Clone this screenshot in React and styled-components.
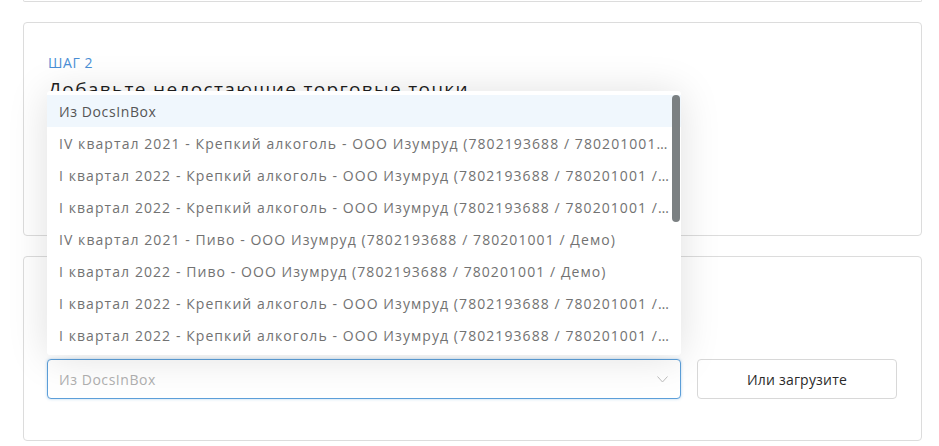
import React from "react";
import styled, { createGlobalStyle } from "styled-components";

const Global = createGlobalStyle`
  html, body { margin: 0; padding: 0; background: #fff; }
  body { font-family: "Open Sans", "Liberation Sans", sans-serif; }
  * { box-sizing: border-box; }
`;

const Page = styled.div`
  display: flex;
  flex-direction: column;
  gap: 20px;
  padding: 0 17px 0 23px;
  width: 939px;
`;

const CardStub = styled.div`
  height: 2px;
  border: 1px solid #dcdcdc;
  border-top: none;
  border-radius: 0 0 4px 4px;
`;

const Card = styled.section`
  position: relative;
  border: 1px solid #dcdcdc;
  border-radius: 4px;
  padding: ${(p) => p.$pad};
  min-height: ${(p) => p.$minH || "auto"};
  display: flex;
  flex-direction: column;
`;

const Step = styled.div`
  font-size: 14px;
  line-height: 16px;
  letter-spacing: 0.6px;
  color: #4a8fd6;
  text-transform: uppercase;
`;

const Title = styled.h2`
  margin: 6px 0 0;
  font-size: 19px;
  line-height: 24px;
  letter-spacing: 1.35px;
  font-weight: 400;
  color: #1e1e1e;
`;

const Row = styled.div`
  display: flex;
  gap: 16px;
`;

const SelectWrap = styled.div`
  position: relative;
  width: 634px;
`;

const SelectBox = styled.div`
  height: 40px;
  border: 1px solid #5d9fd9;
  border-radius: 4px;
  box-shadow: 0 0 3px rgba(93, 159, 217, 0.45);
  display: flex;
  align-items: center;
  justify-content: space-between;
  padding: 0 12px 0 11px;
  font-size: 14px;
  letter-spacing: 0.55px;
  color: #b0b0b0;
  background: #fff;
`;

const Menu = styled.ul`
  position: absolute;
  left: 0;
  right: 0;
  bottom: 44px;
  margin: 0;
  padding: 4px 0;
  list-style: none;
  background: #fff;
  border-radius: 3px;
  box-shadow: 0 2px 40px rgba(0, 0, 0, 0.13);
  overflow: hidden;
  z-index: 5;
`;

const Item = styled.li`
  height: 32px;
  display: flex;
  align-items: center;
  padding: 0 11px 0 12px;
  font-size: 14px;
  letter-spacing: ${(p) => (p.$active ? "0.6px" : "1.07px")};
  color: ${(p) => (p.$active ? "#555" : "#727272")};
  background: ${(p) => (p.$active ? "#f0f7fd" : "#fff")};
  white-space: nowrap;
  overflow: hidden;
`;

const ItemText = styled.span`
  overflow: hidden;
  text-overflow: ellipsis;
`;

const Thumb = styled.div`
  position: absolute;
  right: 1px;
  top: 4px;
  width: 8px;
  height: 127px;
  border-radius: 4px;
  background: #7b8082;
`;

const Button = styled.button`
  width: 200px;
  height: 40px;
  border: 1px solid #d8d8d8;
  border-radius: 4px;
  background: #fff;
  font-family: inherit;
  font-size: 14px;
  letter-spacing: 0.2px;
  color: #2a2a2a;
`;

const items = [
  "Из DocsInBox",
  "IV квартал 2021 - Крепкий алкоголь - ООО Изумруд (7802193688 / 780201001 / Демо)",
  "I квартал 2022 - Крепкий алкоголь - ООО Изумруд (7802193688 / 780201001 / Демо)",
  "I квартал 2022 - Крепкий алкоголь - ООО Изумруд (7802193688 / 780201001 / Демо)",
  "IV квартал 2021 - Пиво - ООО Изумруд (7802193688 / 780201001 / Демо)",
  "I квартал 2022 - Пиво - ООО Изумруд (7802193688 / 780201001 / Демо)",
  "I квартал 2022 - Крепкий алкоголь - ООО Изумруд (7802193688 / 780201001 / Демо)",
  "I квартал 2022 - Крепкий алкоголь - ООО Изумруд (7802193688 / 780201001 / Демо)",
];

export default function App() {
  return (
    <>
      <Global />
      <Page>
        <CardStub />
        <Card $pad="32px 24px 24px" $minH="214px">
          <Step>Шаг 2</Step>
          <Title>Добавьте недостающие торговые точки</Title>
        </Card>
        <Card $pad="102px 23px 41px">
          <Row>
            <SelectWrap>
              <Menu>
                {items.map((t, i) => (
                  <Item key={i} $active={i === 0}>
                    <ItemText>{t}</ItemText>
                  </Item>
                ))}
                <Thumb />
              </Menu>
              <SelectBox>
                <span>Из DocsInBox</span>
                <svg width="11" height="7" viewBox="0 0 11 7">
                  <path d="M0.5 0.5 L5.5 6 L10.5 0.5" fill="none" stroke="#bdbdbd" strokeWidth="1" />
                </svg>
              </SelectBox>
            </SelectWrap>
            <Button>Или загрузите</Button>
          </Row>
        </Card>
      </Page>
    </>
  );
}
